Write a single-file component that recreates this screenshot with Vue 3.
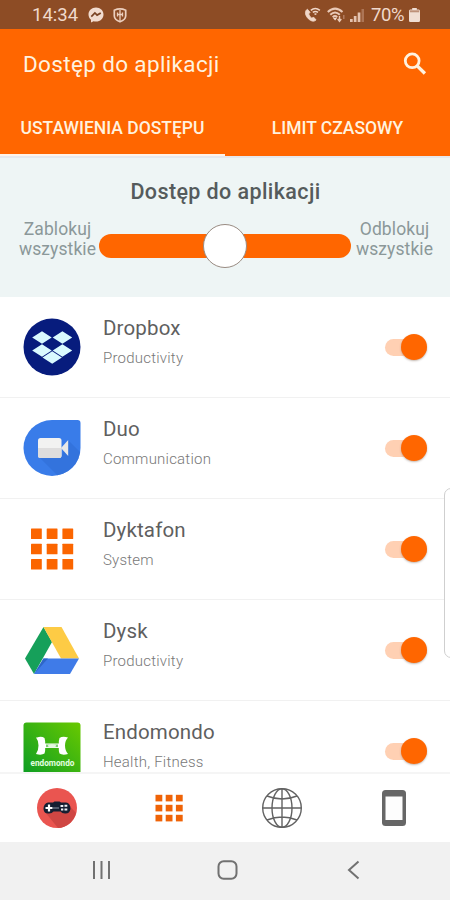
<script setup>
const apps = [
  { id: 'dropbox', name: 'Dropbox', category: 'Productivity' },
  { id: 'duo', name: 'Duo', category: 'Communication' },
  { id: 'dyktafon', name: 'Dyktafon', category: 'System' },
  { id: 'dysk', name: 'Dysk', category: 'Productivity' },
  { id: 'endomondo', name: 'Endomondo', category: 'Health, Fitness' },
]
</script>

<template>
  <div class="screen">
    <div class="status">
      <span class="clock">14:34</span>
      <svg class="messenger" width="16" height="16" viewBox="0 0 16 16">
        <path d="M8 .5C3.700.5.5 3.600.5 7.500c0 2.200 1 4 2.500 5.300V15.600l2.600-1.300c.8.200 1.600.3 2.400.3 4.300 0 7.500-3.100 7.500-7.100S12.300.5 8 .5z" fill="#f2dccf" />
        <path d="M3.300 9.600 6.900 5.900l2.200 2.200 3.700-2.200" fill="none" stroke="#7a4323" stroke-width="1.700" />
      </svg>
      <svg class="shield" width="14" height="15" viewBox="0 0 14 15">
        <path d="M1.300 2.200Q7-.3 12.700 2.200V8Q12.500 11.800 7 13.800 1.500 11.800 1.300 8z" fill="none" stroke="#eccfbe" stroke-width="1.700" />
        <path d="M7 2v11M4.500 4.500v4M9.500 4.500v4M4 6.500h6" stroke="#eccfbe" stroke-width="1.300" />
      </svg>
      <span class="grow"></span>
      <svg class="call" width="17" height="16" viewBox="0 0 17 16">
        <path d="M3.400 2.200C.8 3.600.8 7.300 3.400 10.700c2.600 3.200 6.300 4.600 8.700 2.300L9.800 10.300l-2.100.8C6.300 10 5.200 8.500 4.700 6.900l1.400-1.600z" fill="#f0d7c8" stroke="#f0d7c8" stroke-width=".8" />
        <path d="M6.800 3.300Q11.300-.4 15.900 3.300M8.800 5.400q2.600-2 5.200 0M10.500 7.300q1-.7 1.900 0" fill="none" stroke="#f0d7c8" stroke-width="1.500" />
      </svg>
      <svg class="wifi" width="19" height="16" viewBox="0 0 19 16">
        <path d="M.8 5Q8-1.800 15.500 5M3.300 7.700Q8 3.300 12.800 7.700M5.700 10.200Q8 8 10.200 10.200" fill="none" stroke="#e9c9b7" stroke-width="2" />
        <path d="m6 11 2.100 2.500L10 11z" fill="#f2dccf" />
        <path d="M12.500 9v5M10.700 12l1.800 2.300 1.800-2.300" fill="none" stroke="#e9c9b7" stroke-width="1.400" />
        <path d="M16.800 8v4" stroke="#b98468" stroke-width="1.300" />
      </svg>
      <svg class="signal" width="15" height="14" viewBox="0 0 15 14">
        <path d="M0 11h2.700v3H0zM3.800 8h2.700v6H3.800zM7.700 4.500h2.700V14H7.700z" fill="#e4c2af" />
        <path d="M11.500 1H14v13h-2.500z" fill="#ad7555" />
      </svg>
      <span class="percent">70%</span>
      <svg class="battery" width="11" height="14" viewBox="0 0 11 14">
        <path d="M3.200 0h4.600v1.500h2Q11 1.500 11 3v9.500Q11 14 9.700 14H1.300Q0 14 0 12.500V3q0-1.500 1.300-1.500h1.900z" fill="#f0ded3" />
        <path d="M.8 2.300h9.400v2H.8z" fill="#bd9078" />
      </svg>
    </div>

    <header>
      <div class="bar">
        <h1>Dostęp do aplikacji</h1>
        <svg width="24" height="24" viewBox="0 0 24 24">
          <circle cx="9.200" cy="8.800" r="6.900" fill="none" stroke="#fff2df" stroke-width="2.800" />
          <path d="m14.200 13.800 7.700 7.700" stroke="#fff2df" stroke-width="3.300" />
        </svg>
      </div>
      <div class="tabs">
        <div class="tab active">USTAWIENIA DOSTĘPU</div>
        <div class="tab">LIMIT CZASOWY</div>
      </div>
    </header>

    <section class="access">
      <h2>Dostęp do aplikacji</h2>
      <div class="slider-row">
        <div class="label block">Zablokuj<br />wszystkie</div>
        <div class="track"><div class="thumb"></div></div>
        <div class="label unblock">Odblokuj<br />wszystkie</div>
      </div>
    </section>

    <main>
      <div v-for="app in apps" :key="app.id" class="row">
        <svg class="app-icon" width="58" height="58" viewBox="0 0 58 58">
          <g v-if="app.id === 'dropbox'">
            <circle cx="29" cy="29" r="28.500" fill="#071c7d" />
            <path fill="#d9faff" d="m19 13.200 9.700 6.300-9.700 6.200-9.800-6.200zM39.400 13.200l9.800 6.300-9.800 6.200-9.700-6.200zM19 26.300l9.700 6.200-9.700 6.300-9.800-6.300zM39.400 26.300l9.800 6.200-9.800 6.300-9.700-6.300zM29.200 33.300l9.700 6.200-9.700 6.200-9.700-6.200z" />
          </g>
          <g v-else-if="app.id === 'duo'">
            <defs>
              <clipPath id="duo-shape"><path d="M29 1h25.500q3 0 3 3v25A28.500 28 0 1 1 29 1z" /></clipPath>
            </defs>
            <g clip-path="url(#duo-shape)">
              <path d="M0 0h58v58H0z" fill="#397ce9" />
              <path d="m45 21 13 13v24H36L17 39h21z" fill="#3270d8" opacity=".75" />
            </g>
            <rect x="15" y="19" width="23.500" height="20" rx="2.500" fill="#f2f2f1" />
            <path d="M15 29h23.500v7.500q0 2.500-2.500 2.500H17.500Q15 39 15 36.500z" fill="#dedddd" />
            <path d="m38 29 7.200-8v16z" fill="#e8e8e7" />
          </g>
          <g v-else-if="app.id === 'dyktafon'" fill="#fb6500">
            <template v-for="y in 3" :key="y">
              <rect v-for="x in 3" :key="x" :x="8 + (x - 1) * 15.700" :y="8.500 + (y - 1) * 15.200" width="10.800" height="10.600" rx=".5" />
            </template>
          </g>
          <g v-else-if="app.id === 'dysk'">
            <path d="M20.500 6 29 21 11 53 2 37.500z" fill="#16a05a" />
            <path d="M20.500 6H38.500L56 37.500H38z" fill="#fdcb45" />
            <path d="M20.500 37.500H56L47 53H11z" fill="#3f7be8" />
            <path d="m20.500 37.500-9.500 15.500 14-15.500z" fill="#2e66c8" />
          </g>
          <g v-else>
            <defs>
              <linearGradient id="green" x1="0" y1="1" x2="1" y2="0">
                <stop offset="0" stop-color="#079b25" />
                <stop offset="1" stop-color="#69c900" />
              </linearGradient>
            </defs>
            <rect x=".5" y=".5" width="57" height="57" rx="3" fill="url(#green)" />
            <path d="M14 15.500q4.500-1.500 7.500.5.900 3 .7 5.600h13.600q-.2-2.600.7-5.600 3-2 8.500-.5-3 3-3 8t3 8.500q-5.500 1.500-8.500-.5-.9-3-.7-5.500H22.200q.2 2.500-.7 5.500-3 2-8.500.5 2.500-3.500 2.500-8.500T13 15.500z" fill="#fff" />
            <path d="M23 22.500h12v2.600H23z" fill="#7fce73" />
            <ellipse cx="29" cy="23.800" rx="4" ry="1.900" fill="#e5f8e1" />
            <text x="29.500" y="43.500" text-anchor="middle" textLength="44" lengthAdjust="spacingAndGlyphs" class="endo">endomondo</text>
          </g>
        </svg>
        <div class="info">
          <div class="name">{{ app.name }}</div>
          <div class="category">{{ app.category }}</div>
        </div>
        <div class="switch"><div class="knob"></div></div>
      </div>
    </main>

    <nav>
      <div>
        <svg width="42" height="42" viewBox="0 0 42 42">
          <circle cx="21" cy="21" r="20" fill="#ea5550" />
          <path d="m32 17 8 9A20 20 0 0 1 22 41L9 25z" fill="#cf4643" />
          <path d="M12 15.500h5l1.500-1h5l1.500 1h5Q34.500 16 34.500 22q-1 5-5.500 4.500-3 0-4.500-2h-7q-1.500 2-4.500 2-5 .5-5.500-4.500 0-5.500 4.500-6.500z" fill="#151e31" />
          <path d="M13 17.500v7M9.500 21h7" stroke="#fff" stroke-width="2.200" />
          <path d="M17 21h6" stroke="#8c96a8" />
          <path d="M24.500 19h2.800M28.500 18.800h2.800M28.500 22.500h2.800M25 22.500h2.300" stroke="#eff1f5" stroke-width="2" />
        </svg>
      </div>
      <div>
        <svg width="28" height="28" viewBox="0 0 28 28" fill="#ef6307">
          <template v-for="y in 3" :key="y">
            <rect v-for="x in 3" :key="x" :x=".5 + (x - 1) * 10.200" :y=".8 + (y - 1) * 10" width="6.800" height="6.600" />
          </template>
        </svg>
      </div>
      <div>
        <svg width="42" height="42" viewBox="0 0 42 42" fill="none" stroke="#626262" stroke-width="1.400">
          <circle cx="21" cy="21" r="19.300" />
          <ellipse cx="21" cy="21" rx="10" ry="19.300" />
          <path d="M21 1.700v38.600M1.700 21h38.600M6 9Q21 15 36 9M6 33q15-6 30 0" />
        </svg>
      </div>
      <div>
        <svg width="24" height="36" viewBox="0 0 24 36">
          <rect width="24" height="36" rx="3.500" fill="#666" />
          <path d="M3.500 6.500h17V30h-17z" fill="#fdfdfd" />
        </svg>
      </div>
    </nav>

    <footer>
      <svg width="20" height="20" viewBox="0 0 20 20" stroke="#717171" stroke-width="2">
        <path d="M2 1v18M9.500 1v18M17 1v18" />
      </svg>
      <svg class="home" width="21" height="20" viewBox="0 0 21 20" fill="none" stroke="#717171" stroke-width="2">
        <rect x="1.500" y="1.200" width="18" height="17.600" rx="5.200" />
      </svg>
      <svg width="14" height="20" viewBox="0 0 14 20" fill="none" stroke="#717171" stroke-width="2">
        <path d="M12.500 1.500 3 10l9.500 8.500" />
      </svg>
    </footer>

    <div class="edge-handle"></div>
  </div>
</template>

<style>
body { overflow: hidden; }
</style>

<style scoped>
* { box-sizing: border-box; }
svg { display: block; flex: none; }
.screen {
  position: relative;
  width: 450px;
  height: 900px;
  display: flex;
  flex-direction: column;
  overflow: hidden;
  background: #fff;
  font-family: Roboto, "Liberation Sans", sans-serif;
}
.status {
  flex: none;
  height: 29px;
  display: flex;
  align-items: center;
  padding: 1px 30px 0 32px;
  background: #8d4c25;
  color: #f0d9cc;
  font-size: 18.500px;
  line-height: 28px;
}
.clock { width: 55.500px; }
.shield { margin-left: 9px; }
.grow { flex: 1; }
.call { margin-right: 6px; }
.wifi { margin-right: 4px; }
.signal { margin-right: 6px; }
.percent { width: 35px; margin-right: 3px; letter-spacing: -.4px; }
header {
  flex: none;
  height: 127px;
  display: flex;
  flex-direction: column;
  background: #ff6600;
  color: #fff2df;
}
.bar {
  height: 69px;
  display: flex;
  align-items: center;
  justify-content: space-between;
  padding: 0 23px 0 23px;
}
h1, h2 { margin: 0; }
h1 { font-size: 22.500px; font-weight: 400; letter-spacing: .35px; line-height: 30px; }
.tabs { flex: 1; display: flex; }
.tab {
  flex: 1;
  padding-top: 19px;
  text-align: center;
  font-size: 17.500px;
  font-weight: 500;
  line-height: 22px;
  border-bottom: 2px solid transparent;
}
.active { border-color: #fff3e8; }
.access {
  flex: none;
  height: 141px;
  padding-top: 20px;
  background: #eef5f5;
  border-top: 2px solid #e6e8ec;
}
h2 {
  color: #555b5c;
  font-size: 21.500px;
  font-weight: 500;
  letter-spacing: .4px;
  line-height: 28px;
  text-align: center;
  padding-left: 1px;
}
.slider-row {
  display: flex;
  align-items: center;
  justify-content: center;
  padding-top: 13px;
}
.label {
  width: 87px;
  color: #8b9899;
  font-size: 17.500px;
  line-height: 20px;
  text-align: center;
  letter-spacing: .1px;
}
.block { padding-left: 4px; }
.track {
  width: 252px;
  height: 24px;
  margin-top: 13px;
  border-radius: 12px;
  background: #ff6600;
  display: flex;
  align-items: center;
  justify-content: center;
}
.thumb {
  width: 44px;
  height: 44px;
  flex: none;
  border-radius: 50%;
  border: 1px solid #998b82;
  background: #fff;
}
main { flex: 1; min-height: 0; overflow: hidden; }
.row {
  height: 101px;
  display: flex;
  align-items: flex-start;
  padding: 21px 23px 0 22.500px;
  border-bottom: 1px solid #f1f1f1;
}
.info { flex: 1; padding-left: 22.500px; }
.name { color: #5f5f5f; font-size: 20.500px; line-height: 24px; letter-spacing: .15px; margin-top: -2px; }
.category { color: #787878; font-size: 15px; font-weight: 300; line-height: 20px; letter-spacing: .22px; margin-top: 8px; }
.switch {
  width: 42px;
  height: 17px;
  margin-top: 20.500px;
  border-radius: 9px;
  background: #ffd0b3;
  display: flex;
  align-items: center;
  justify-content: flex-end;
}
.knob {
  flex: none;
  width: 26px;
  height: 26px;
  border-radius: 50%;
  background: #ff6600;
  box-shadow: 0 1px 2px rgba(80, 50, 30, .35);
}
.endo { fill: #e3ffe0; font-size: 9px; font-weight: 700; }
nav {
  flex: none;
  height: 70px;
  display: flex;
  background: #fff;
  border-top: 2px solid #f5f5f5;
}
nav > div { flex: 1; display: flex; align-items: center; justify-content: center; padding-left: 1px; }
footer {
  flex: none;
  height: 58px;
  display: flex;
  align-items: center;
  justify-content: space-between;
  padding: 0 90px 2px 92px;
  background: #f1f1f1;
}
.home { margin-right: 4px; }
.edge-handle {
  position: absolute;
  left: 444px;
  top: 488px;
  width: 14px;
  height: 170px;
  border: 1px solid #cfcfcf;
  border-radius: 8px;
  background: #fff;
}
</style>
